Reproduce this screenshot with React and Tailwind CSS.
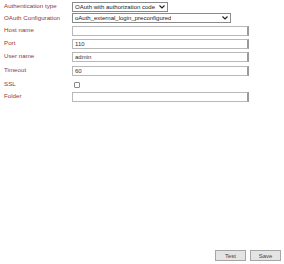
import React from 'react';

const font = { fontFamily: '"Liberation Sans", Arial, sans-serif' };

function Chevron() {
  return (
    <svg width="6" height="4" viewBox="0 0 6 4" className="shrink-0">
      <path d="M0.5 0.5 L3 3 L5.5 0.5" fill="none" stroke="#222" strokeWidth="1.2" />
    </svg>
  );
}

function FakeSelect({ value, width }) {
  return (
    <div className={`flex items-center justify-between h-[10px] ${width} border border-[#8a8a8a] bg-white pl-[2px] pr-[2px] text-[6px] text-[#222] leading-none`}>
      <span className="whitespace-nowrap overflow-hidden">{value}</span>
      <Chevron />
    </div>
  );
}

function TextBox({ value }) {
  return (
    <div className="flex items-center h-[10px] w-[177px] border border-[#b8b8b8] border-r-2 border-r-[#9a9a9a] bg-white pl-[2px] text-[6px] text-[#333] leading-none">
      {value}
    </div>
  );
}

function Row({ label, h, children }) {
  return (
    <div className={`flex items-center ${h}`}>
      <div className="w-[68px] shrink-0 text-[6.2px] text-[#943636] leading-none whitespace-nowrap">{label}</div>
      {children}
    </div>
  );
}

export default function App() {
  return (
    <div className="h-[264px] w-[284px] bg-white flex flex-col" style={font}>
      <div className="pl-[4px] pt-[1px]">
        <Row label="Authentication type" h="h-[11px]">
          <FakeSelect value="OAuth with authorization code" width="w-[96px]" />
        </Row>
        <Row label="OAuth Configuration" h="h-[12px]">
          <FakeSelect value="oAuth_external_login_preconfigured" width="w-[159px]" />
        </Row>
        <Row label="Host name" h="h-[13px]">
          <TextBox value="" />
        </Row>
        <Row label="Port" h="h-[13px]">
          <TextBox value="110" />
        </Row>
        <Row label="User name" h="h-[13px]">
          <TextBox value="admin" />
        </Row>
        <Row label="Timeout" h="h-[15px]">
          <TextBox value="60" />
        </Row>
        <Row label="SSL" h="h-[13px]">
          <div className="ml-[2px] h-[6px] w-[6px] border border-[#8a8a8a] rounded-[1px] bg-white" />
        </Row>
        <Row label="Folder" h="h-[11px]">
          <TextBox value="" />
        </Row>
      </div>
      <div className="mt-auto flex justify-end gap-[4px] pr-[3px] pb-[3px]">
        <button className="h-[11px] w-[31px] border border-[#a5a5a5] bg-[#e4e4e4] text-[6px] text-[#444] leading-none">Test</button>
        <button className="h-[11px] w-[31px] border border-[#a5a5a5] bg-[#e4e4e4] text-[6px] text-[#444] leading-none">Save</button>
      </div>
    </div>
  );
}
